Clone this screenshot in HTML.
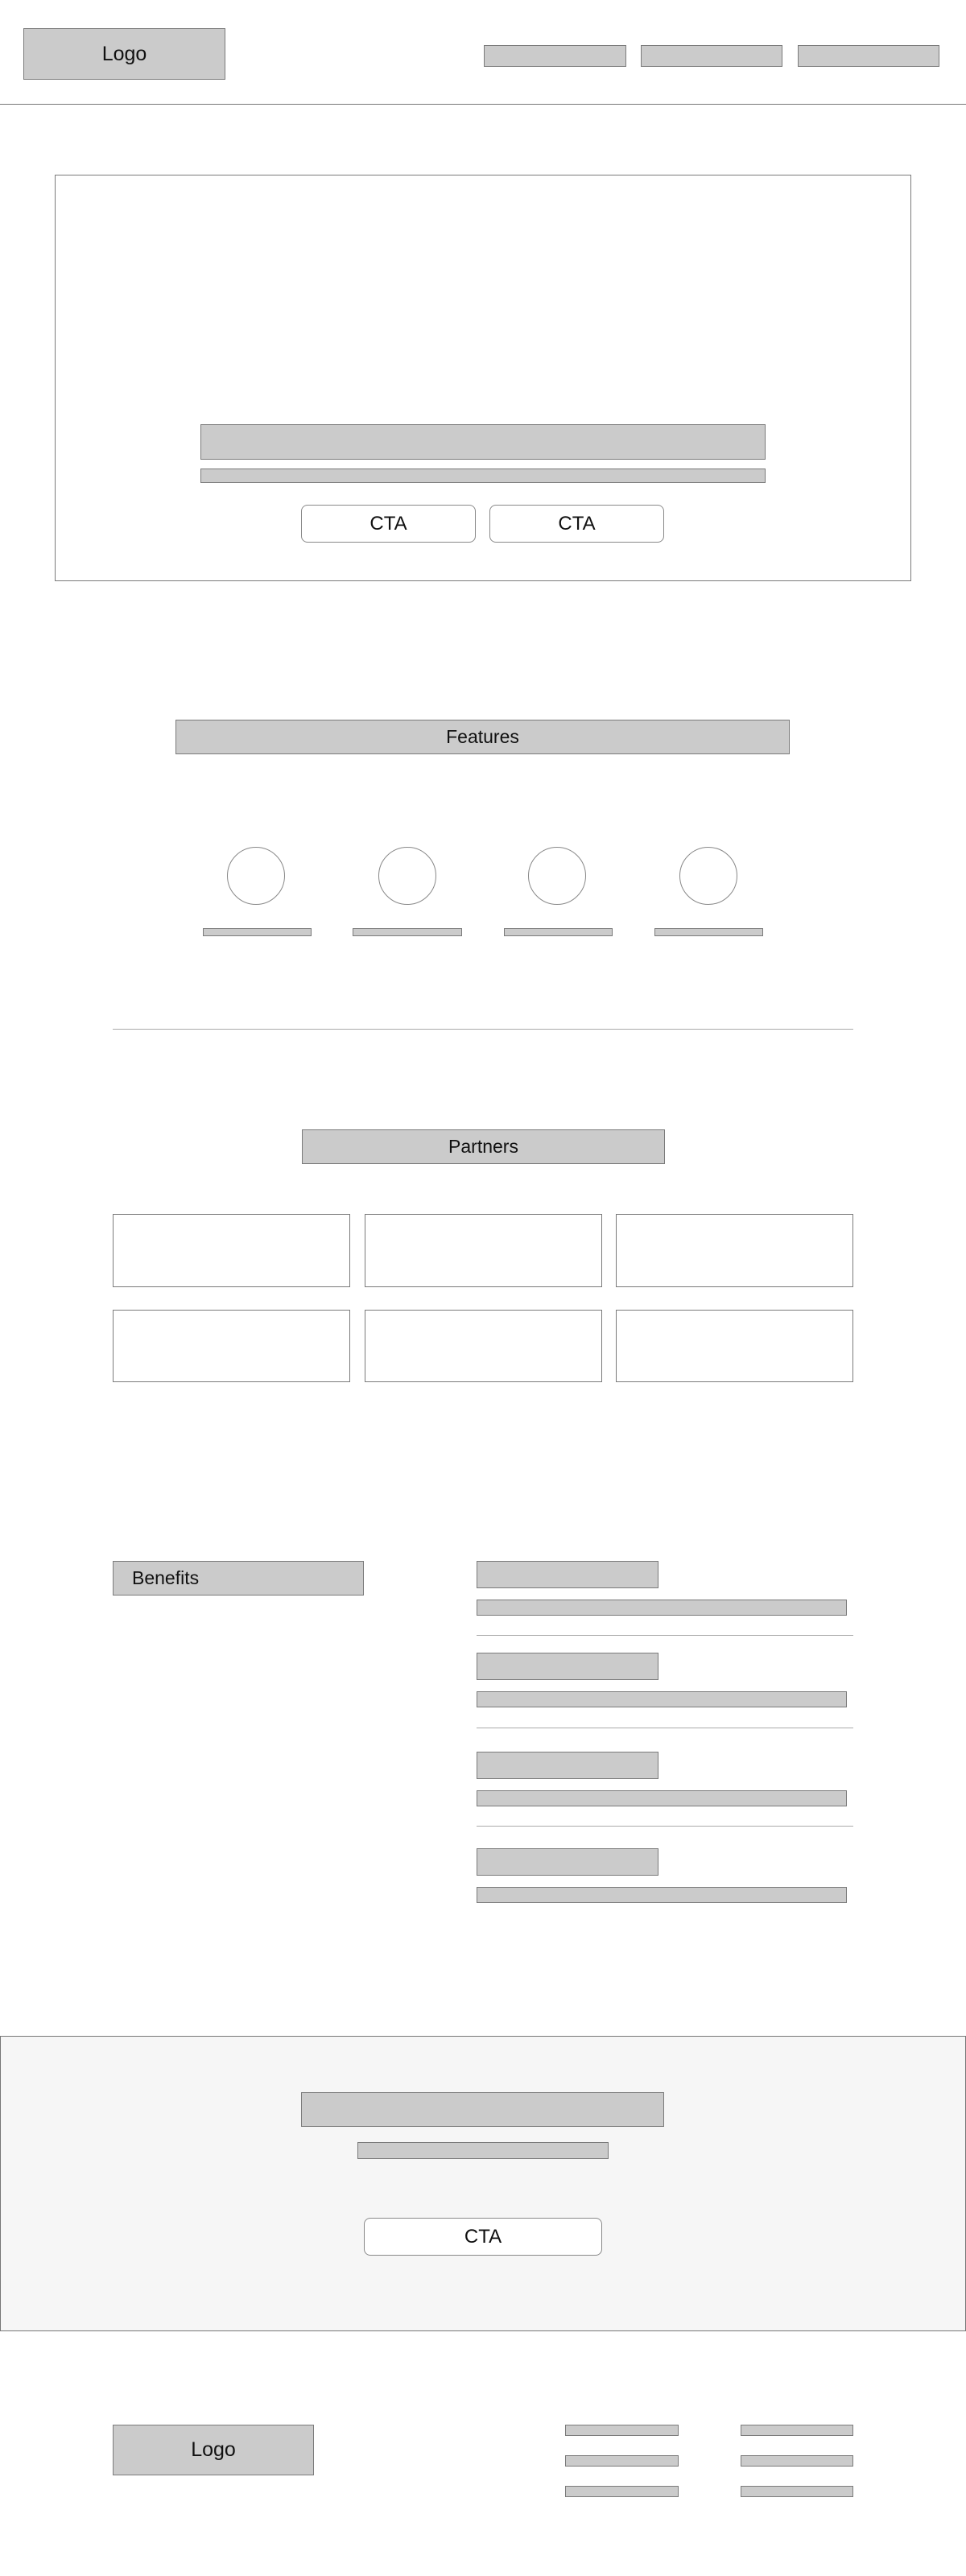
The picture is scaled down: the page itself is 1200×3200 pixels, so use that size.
<!DOCTYPE html>
<html><head><meta charset="utf-8"><style>
html,body{margin:0;padding:0;background:#fff;}
body{width:1200px;height:3200px;position:relative;overflow:hidden;font-family:"Liberation Sans",sans-serif;color:#111;}
div{position:absolute;box-sizing:border-box;}
.g{background:#cbcbcb;border:1px solid #7a7a7a;}
.o{border:1px solid #7a7a7a;background:#fff;}
.c{display:flex;align-items:center;justify-content:center;}
.btn{border:1px solid #888;border-radius:8px;background:#fff;font-size:24px;}
.ln{height:1px;background:#aaa;}
.ci{border:1px solid #888;border-radius:50%;width:72px;height:72px;}
</style></head><body>
<div class="g c" style="left:29px;top:35px;width:251px;height:64px;font-size:25px;">Logo</div>
<div class="g" style="left:601px;top:56px;width:177px;height:27px;"></div>
<div class="g" style="left:796px;top:56px;width:176px;height:27px;"></div>
<div class="g" style="left:991px;top:56px;width:176px;height:27px;"></div>
<div style="left:0;top:129px;width:1200px;height:1px;background:#777;"></div>

<div class="o" style="left:68px;top:217px;width:1064px;height:505px;"></div>
<div class="g" style="left:249px;top:527px;width:702px;height:44px;"></div>
<div class="g" style="left:249px;top:582px;width:702px;height:18px;"></div>
<div class="btn c" style="left:374px;top:627px;width:217px;height:47px;">CTA</div>
<div class="btn c" style="left:608px;top:627px;width:217px;height:47px;">CTA</div>

<div class="g c" style="left:218px;top:894px;width:763px;height:43px;font-size:23px;">Features</div>
<div class="ci" style="left:282px;top:1052px;"></div>
<div class="ci" style="left:470px;top:1052px;"></div>
<div class="ci" style="left:656px;top:1052px;"></div>
<div class="ci" style="left:844px;top:1052px;"></div>
<div class="g" style="left:252px;top:1153px;width:135px;height:10px;"></div>
<div class="g" style="left:438px;top:1153px;width:136px;height:10px;"></div>
<div class="g" style="left:626px;top:1153px;width:135px;height:10px;"></div>
<div class="g" style="left:813px;top:1153px;width:135px;height:10px;"></div>
<div class="ln" style="left:140px;top:1278px;width:920px;"></div>

<div class="g c" style="left:375px;top:1403px;width:451px;height:43px;font-size:23px;">Partners</div>
<div class="o" style="left:140px;top:1508px;width:295px;height:91px;"></div>
<div class="o" style="left:453px;top:1508px;width:295px;height:91px;"></div>
<div class="o" style="left:765px;top:1508px;width:295px;height:91px;"></div>
<div class="o" style="left:140px;top:1627px;width:295px;height:90px;"></div>
<div class="o" style="left:453px;top:1627px;width:295px;height:90px;"></div>
<div class="o" style="left:765px;top:1627px;width:295px;height:90px;"></div>

<div class="g" style="left:140px;top:1939px;width:312px;height:43px;font-size:23px;line-height:41px;padding-left:23px;">Benefits</div>
<div class="g" style="left:592px;top:1939px;width:226px;height:34px;"></div>
<div class="g" style="left:592px;top:1987px;width:460px;height:20px;"></div>
<div class="ln" style="left:592px;top:2031px;width:468px;"></div>
<div class="g" style="left:592px;top:2053px;width:226px;height:34px;"></div>
<div class="g" style="left:592px;top:2101px;width:460px;height:20px;"></div>
<div class="ln" style="left:592px;top:2146px;width:468px;"></div>
<div class="g" style="left:592px;top:2176px;width:226px;height:34px;"></div>
<div class="g" style="left:592px;top:2224px;width:460px;height:20px;"></div>
<div class="ln" style="left:592px;top:2268px;width:468px;"></div>
<div class="g" style="left:592px;top:2296px;width:226px;height:34px;"></div>
<div class="g" style="left:592px;top:2344px;width:460px;height:20px;"></div>

<div style="left:0;top:2529px;width:1200px;height:367px;background:#f6f6f6;border:1px solid #777;"></div>
<div class="g" style="left:374px;top:2599px;width:451px;height:43px;"></div>
<div class="g" style="left:444px;top:2661px;width:312px;height:21px;"></div>
<div class="btn c" style="left:452px;top:2755px;width:296px;height:47px;">CTA</div>

<div class="g c" style="left:140px;top:3012px;width:250px;height:63px;font-size:25px;">Logo</div>
<div class="g" style="left:702px;top:3012px;width:141px;height:14px;"></div>
<div class="g" style="left:920px;top:3012px;width:140px;height:14px;"></div>
<div class="g" style="left:702px;top:3050px;width:141px;height:14px;"></div>
<div class="g" style="left:920px;top:3050px;width:140px;height:14px;"></div>
<div class="g" style="left:702px;top:3088px;width:141px;height:14px;"></div>
<div class="g" style="left:920px;top:3088px;width:140px;height:14px;"></div>
</body></html>
